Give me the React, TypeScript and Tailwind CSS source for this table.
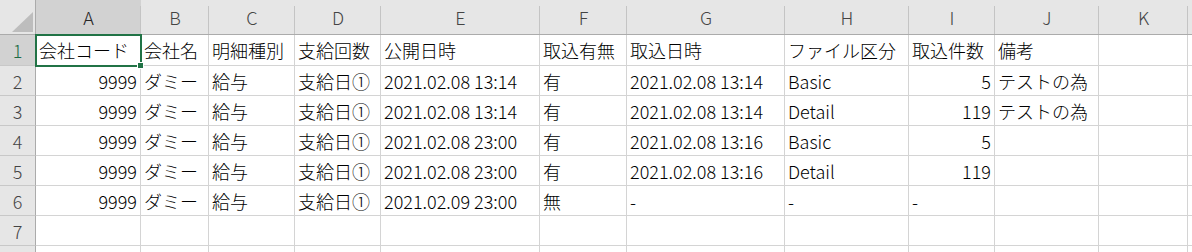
import React from "react";

const cols = ["A", "B", "C", "D", "E", "F", "G", "H", "I", "J", "K", ""];

type Cell = { t: string; r?: boolean };

const rows: Cell[][] = [
  [
    { t: "会社コード" },
    { t: "会社名" },
    { t: "明細種別" },
    { t: "支給回数" },
    { t: "公開日時" },
    { t: "取込有無" },
    { t: "取込日時" },
    { t: "ファイル区分" },
    { t: "取込件数" },
    { t: "備考" },
    { t: "" },
    { t: "" },
  ],
  [
    { t: "9999", r: true },
    { t: "ダミー" },
    { t: "給与" },
    { t: "支給日①" },
    { t: "2021.02.08 13:14" },
    { t: "有" },
    { t: "2021.02.08 13:14" },
    { t: "Basic" },
    { t: "5", r: true },
    { t: "テストの為" },
    { t: "" },
    { t: "" },
  ],
  [
    { t: "9999", r: true },
    { t: "ダミー" },
    { t: "給与" },
    { t: "支給日①" },
    { t: "2021.02.08 13:14" },
    { t: "有" },
    { t: "2021.02.08 13:14" },
    { t: "Detail" },
    { t: "119", r: true },
    { t: "テストの為" },
    { t: "" },
    { t: "" },
  ],
  [
    { t: "9999", r: true },
    { t: "ダミー" },
    { t: "給与" },
    { t: "支給日①" },
    { t: "2021.02.08 23:00" },
    { t: "有" },
    { t: "2021.02.08 13:16" },
    { t: "Basic" },
    { t: "5", r: true },
    { t: "" },
    { t: "" },
    { t: "" },
  ],
  [
    { t: "9999", r: true },
    { t: "ダミー" },
    { t: "給与" },
    { t: "支給日①" },
    { t: "2021.02.08 23:00" },
    { t: "有" },
    { t: "2021.02.08 13:16" },
    { t: "Detail" },
    { t: "119", r: true },
    { t: "" },
    { t: "" },
    { t: "" },
  ],
  [
    { t: "9999", r: true },
    { t: "ダミー" },
    { t: "給与" },
    { t: "支給日①" },
    { t: "2021.02.09 23:00" },
    { t: "無" },
    { t: "-" },
    { t: "-" },
    { t: "-" },
    { t: "" },
    { t: "" },
    { t: "" },
  ],
  Array.from({ length: 12 }, () => ({ t: "" })),
  Array.from({ length: 12 }, () => ({ t: "" })),
];

const rowHeights = ["h-[31px]", "h-[30px]", "h-[30px]", "h-[30px]", "h-[30px]", "h-[30px]", "h-[30px]", "h-[30px]"];

export default function App() {
  return (
    <div
      className="relative w-[1192px] h-[252px] overflow-hidden bg-white text-[18px] font-light text-black"
      style={{ fontFamily: '"Noto Sans CJK JP", "Noto Sans", sans-serif' }}
    >
      <div className="grid grid-cols-[36px_105px_68px_86px_86px_159px_87px_158px_124px_86px_104px_89px_1fr]">
        {/* corner */}
        <div className="relative h-[35px] bg-[#e6e6e6] border-r border-b border-[#ababab]">
          <svg className="absolute left-[12px] top-[12px]" width="21" height="20" viewBox="0 0 21 20">
            <polygon points="21,0 21,20 0,20" fill="#bdbdbd" />
          </svg>
        </div>
        {cols.map((c, i) => (
          <div
            key={c + i}
            className={
              "relative h-[35px] flex items-center justify-center border-b border-[#ababab] leading-none " +
              (i === 0 ? "bg-[#d2d2d2] text-[#262626]" : "bg-[#e6e6e6] text-[#444444]") +
              (i < cols.length - 1
                ? " after:content-[''] after:absolute after:right-0 after:top-[6px] after:bottom-0 after:w-px after:bg-[#c4c4c4]"
                : "")
            }
          >
            {c}
          </div>
        ))}

        {rows.map((row, ri) => (
          <React.Fragment key={ri}>
            <div
              className={
                rowHeights[ri] +
                " flex items-center justify-center border-r border-r-[#ababab] border-b border-b-[#c8c8c8] leading-none " +
                (ri === 0 ? "bg-[#d2d2d2] text-[#1e6b45]" : "bg-[#e6e6e6] text-[#444444]")
              }
            >
              {ri < 7 ? ri + 1 : ""}
            </div>
            {row.map((cell, ci) => (
              <div
                key={ci}
                className={
                  rowHeights[ri] +
                  " flex items-center whitespace-nowrap overflow-hidden px-[3px] border-r border-b border-[#d4d4d4] leading-none " +
                  (cell.r ? "justify-end" : "justify-start")
                }
              >
                {cell.t}
              </div>
            ))}
          </React.Fragment>
        ))}
      </div>

      {/* selection box over A1 */}
      <div className="absolute left-[35px] top-[34px] w-[107px] h-[33px] border-2 border-[#217346] pointer-events-none" />
      <div className="absolute left-[137px] top-[62px] w-[7px] h-[7px] bg-[#217346] border border-white" />
    </div>
  );
}
